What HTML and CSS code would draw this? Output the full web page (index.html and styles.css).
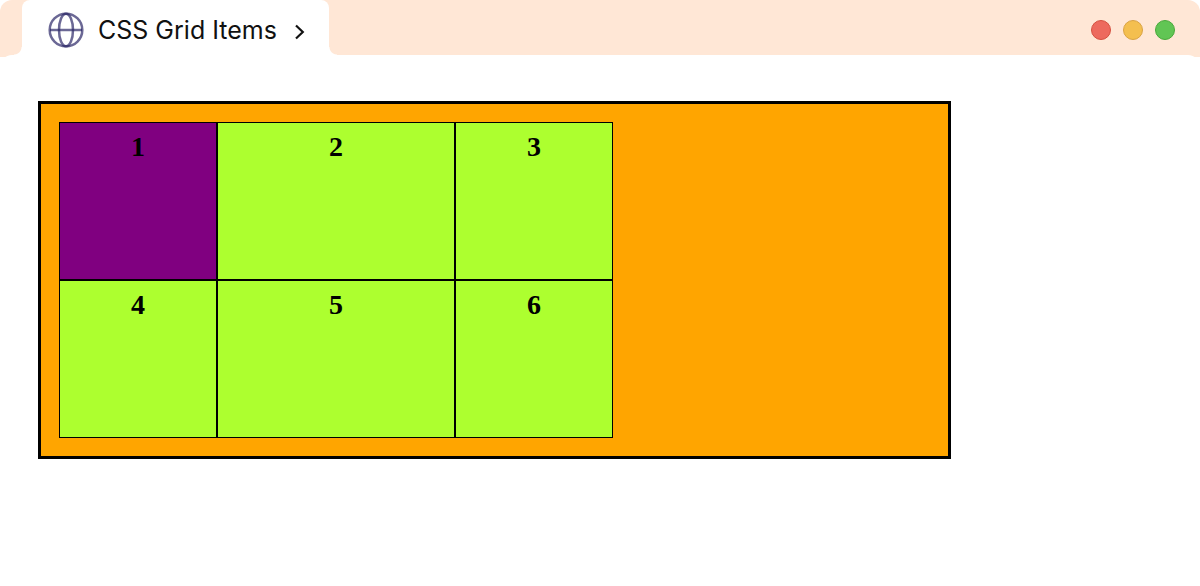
FILE: index.html
```html
<!DOCTYPE html>
<html lang="en">
<head>
    <meta charset="UTF-8">
    <meta name="viewport" content="width=device-width, initial-scale=1.0">
    <title>CSS Grid Items</title>
    <link rel="stylesheet" href="styles.css">
</head>
<body>
    <header class="titlebar">
        <div class="tab">
            <svg class="globe" viewBox="0 0 36 36" fill="none" stroke="#2c2868" stroke-opacity="0.7" stroke-width="2.5">
                <circle cx="18" cy="18" r="16.3"/>
                <ellipse cx="18" cy="18" rx="7" ry="16.3"/>
                <path d="M2 18H34"/>
            </svg>
            <span class="tab-title">CSS Grid Items</span>
            <svg class="chevron" viewBox="0 0 10 16" fill="none" stroke="#111" stroke-width="2.2">
                <path d="M1 1.5L7.8 8L1 14.5"/>
            </svg>
        </div>
        <div class="dots">
            <span class="dot red"></span>
            <span class="dot yellow"></span>
            <span class="dot green"></span>
        </div>
    </header>
    <main class="page">
        <div class="container">
            <div class="item first">1</div>
            <div class="item">2</div>
            <div class="item">3</div>
            <div class="item">4</div>
            <div class="item">5</div>
            <div class="item">6</div>
        </div>
    </main>
</body>
</html>
```

FILE: styles.css
```css
* {
    box-sizing: border-box;
}
body {
    margin: 0;
    background: white;
    font-family: "Liberation Serif", "Times New Roman", serif;
}
.titlebar {
    display: flex;
    justify-content: space-between;
    height: 57px;
    padding: 0 25px 0 22px;
    background: #ffe7d6;
    border-radius: 12px 12px 0 0;
}
.tab {
    position: relative;
    display: flex;
    align-items: center;
    height: 55px;
    padding: 5px 24px 0 26px;
    background: white;
    border-radius: 8px 8px 0 0;
}
/* flared feet of the tab, drawn over the bar */
.tab::before,
.tab::after {
    content: "";
    position: absolute;
    bottom: 0;
    width: 8px;
    height: 8px;
}
.tab::before {
    right: 100%;
    background: radial-gradient(circle at 0 0, transparent 7px, white 8px);
}
.tab::after {
    left: 100%;
    background: radial-gradient(circle at 100% 0, transparent 7px, white 8px);
}
.globe {
    width: 36px;
    height: 36px;
    margin-right: 14px;
}
.tab-title {
    font: 25px/32px Inter, "Liberation Sans", sans-serif;
    color: #111;
}
.chevron {
    width: 10px;
    height: 16px;
    margin: 3px 0 0 18px;
}
.dots {
    display: flex;
    align-items: center;
    gap: 12px;
    padding-top: 3px;
}
.dot {
    width: 20px;
    height: 20px;
    border: 1px solid;
    border-radius: 50%;
}
.red {
    background: #ed6a5e;
    border-color: #d5503f;
}
.yellow {
    background: #f4bf4f;
    border-color: #d9a344;
}
.green {
    background: #61c554;
    border-color: #48a93b;
}
.page {
    margin-top: -2px;
    padding: 46px 38px;
    background: white;
    border-radius: 12px 12px 0 0;
}
.container {
    display: grid;
    grid-template-columns: 158px 238px 158px;
    grid-auto-rows: 158px;
    width: 913px;
    max-width: 100%;
    padding: 18px;
    background: orange;
    border: 3px solid black;
}
.item {
    padding: 8px;
    background: greenyellow;
    border: 1px solid black;
    font-size: 28px;
    font-weight: bold;
    line-height: 32px;
    text-align: center;
}
.first {
    background: purple;
}
```
